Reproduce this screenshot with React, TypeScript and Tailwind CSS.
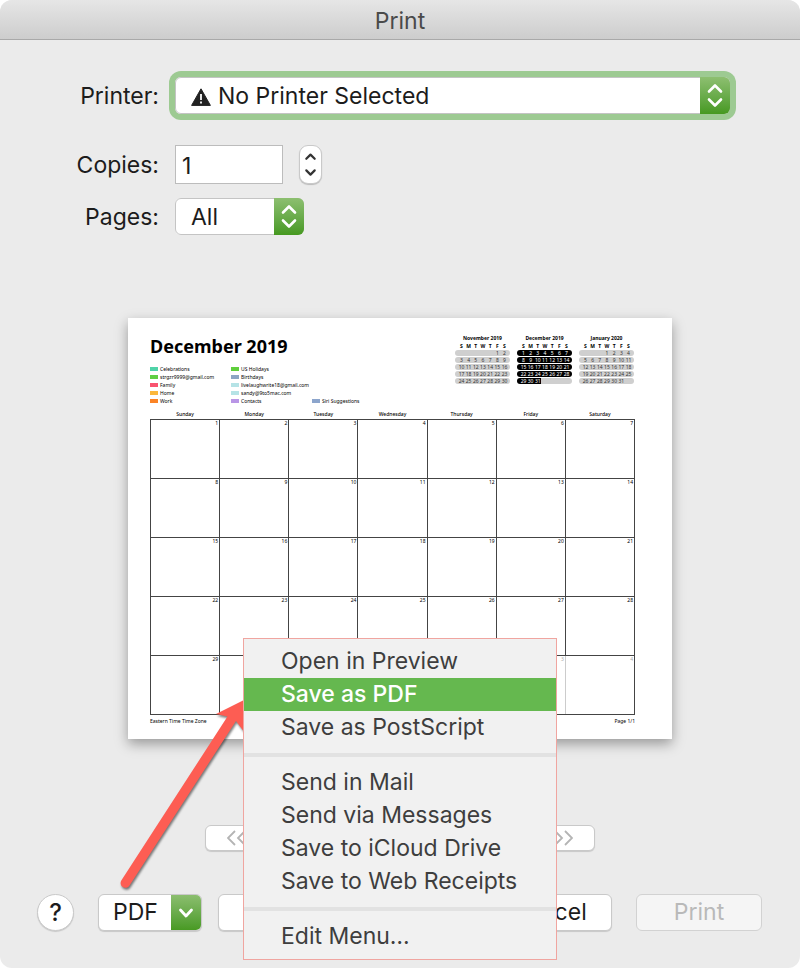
import React, { useState } from "react";

// ── Types ──────────────────────────────────────────────────────────
interface LegendEntry {
  name: string;
  swatch: string;
}

interface MiniMonthData {
  title: string;
  offset: number;
  days: number;
  active?: boolean;
}

// ── Data ───────────────────────────────────────────────────────────
const LEGEND: LegendEntry[][] = [
  [
    { name: "Celebrations", swatch: "bg-[#4fd3a8]" },
    { name: "strgzr9999@gmail.com", swatch: "bg-[#5fcf45]" },
    { name: "Family", swatch: "bg-[#f9536f]" },
    { name: "Home", swatch: "bg-[#fbb83c]" },
    { name: "Work", swatch: "bg-[#fb8426]" },
  ],
  [
    { name: "US Holidays", swatch: "bg-[#5fcf3c]" },
    { name: "Birthdays", swatch: "bg-[#8ca5c4]" },
    { name: "livelaughwrite18@gmail.com", swatch: "bg-[#b5e3e6]" },
    { name: "sandy@9to5mac.com", swatch: "bg-[#b5e3e6]" },
    { name: "Contacts", swatch: "bg-[#b996e6]" },
  ],
  [{ name: "Siri Suggestions", swatch: "bg-[#8ca5cc]" }],
];

const MONTHS: MiniMonthData[] = [
  { title: "November 2019", offset: 5, days: 30 },
  { title: "December 2019", offset: 0, days: 31, active: true },
  { title: "January 2020", offset: 3, days: 31 },
];

const WEEKDAYS = ["Sunday", "Monday", "Tuesday", "Wednesday", "Thursday", "Friday", "Saturday"];

const MENU_GROUPS = [
  ["Open in Preview", "Save as PDF", "Save as PostScript"],
  ["Send in Mail", "Send via Messages", "Save to iCloud Drive", "Save to Web Receipts"],
  ["Edit Menu…"],
];

// ── Arrow glyphs ───────────────────────────────────────────────────
const UpDown: React.FC = () => (
  <svg viewBox="0 0 30 37" className="h-full w-full" fill="none" stroke="white" strokeWidth="2.6" strokeLinecap="round" strokeLinejoin="round">
    <path d="M9 14.5 15 8.5l6 6M9 22.5l6 6 6-6" />
  </svg>
);

const Double: React.FC<{ flip?: boolean }> = ({ flip }) => (
  <svg viewBox="0 0 20 16" className="h-4 w-5" fill="none" stroke="#b4b4b4" strokeWidth="1.8">
    <path d={flip ? "M2 1l7 7-7 7M12 1l7 7-7 7" : "M8 1 1 8l7 7M18 1l-7 7 7 7"} />
  </svg>
);

// ── Popup select ───────────────────────────────────────────────────
interface PopupProps {
  id: string;
  value: string;
  className: string;
  selectClass: string;
  children?: React.ReactNode;
}

const Popup: React.FC<PopupProps> = ({ id, value, className, selectClass, children }) => (
  <div className={`relative h-[37px] rounded-md bg-white ${className}`}>
    <select
      id={id}
      className={`h-full w-full appearance-none rounded-md border border-[#c4c4c4] bg-white pt-[2px] text-[#1c1c1c] outline-none ${selectClass}`}
    >
      <option>{value}</option>
    </select>
    {children}
    <span className="pointer-events-none absolute inset-y-0 right-0 w-[30px] rounded-r-md bg-linear-to-b from-[#8dbf70] to-[#46991f]">
      <UpDown />
    </span>
  </div>
);

// ── Mini month ─────────────────────────────────────────────────────
const MiniMonth: React.FC<{ month: MiniMonthData }> = ({ month }) => {
  const cells = Array.from({ length: 35 }, (_, i) => {
    const day = i - month.offset + 1;
    return day >= 1 && day <= month.days ? day : null;
  });

  return (
    <table className="w-[55px] table-fixed border-separate border-spacing-x-0 border-spacing-y-px text-center text-[5px] leading-[6px]">
      <caption className="pb-px text-[5px] leading-[6px] font-bold">{month.title}</caption>
      <thead>
        <tr>
          {WEEKDAYS.map((d) => (
            <th key={d} className="p-0 font-bold first:w-[10px] first:pl-[3px] last:w-[9px] last:pr-[2px]">
              {d[0]}
            </th>
          ))}
        </tr>
      </thead>
      <tbody>
        {[0, 1, 2, 3, 4].map((w) => (
          <tr key={w}>
            {cells.slice(w * 7, w * 7 + 7).map((day, i) => (
              <td
                key={i}
                className={`h-[6px] p-0 first:rounded-l-full first:pl-[3px] last:rounded-r-full last:pr-[2px] ${
                  month.active && day ? "bg-black text-white" : "bg-[#cfcfcf] text-[#333]"
                }`}
              >
                {day}
              </td>
            ))}
          </tr>
        ))}
      </tbody>
    </table>
  );
};

// ── Month grid ─────────────────────────────────────────────────────
const MonthGrid: React.FC = () => (
  <table className="w-[485px] table-fixed border-collapse text-[5px] leading-[7px]">
    <thead>
      <tr>
        {WEEKDAYS.map((d) => (
          <th key={d} className="h-[8px] p-0 align-top font-medium">
            {d}
          </th>
        ))}
      </tr>
    </thead>
    <tbody>
      {[0, 1, 2, 3, 4].map((w) => (
        <tr key={w}>
          {WEEKDAYS.map((d, i) => {
            const n = w * 7 + i + 1;
            const next = n > 31;
            return (
              <td
                key={d}
                className={`h-[59px] border-y border-y-[#444] p-0 pr-px text-right align-top ${
                  next ? "text-[#aaa]" : ""
                } ${i === 0 ? "border-l border-l-[#444]" : ""} ${
                  next && i < 6 ? "border-r border-r-[#ccc]" : "border-r border-r-[#444]"
                }`}
              >
                {next ? n - 31 : n}
              </td>
            );
          })}
        </tr>
      ))}
    </tbody>
  </table>
);

// ── Page preview ───────────────────────────────────────────────────
const Preview: React.FC = () => (
  <section
    aria-label="Page preview"
    className="mx-auto h-[421px] w-[544px] bg-white pt-[17px] pl-[22px] font-['Noto_Sans',sans-serif] text-black shadow-[0_5px_12px_rgba(0,0,0,0.35)]"
  >
    <div className="flex h-[76px] w-[484px] justify-between">
      <div>
        <h2 className="text-lg leading-[22px] font-bold">December 2019</h2>
        <div className="mt-[8px] flex items-end text-[5px] leading-[8px]">
          {LEGEND.map((column, i) => (
            <ul key={i} className="w-[81px]">
              {column.map((entry) => (
                <li key={entry.name} className="flex items-center gap-[2px] whitespace-nowrap">
                  <span className={`h-1 w-2 shrink-0 ${entry.swatch}`} />
                  {entry.name}
                </li>
              ))}
            </ul>
          ))}
        </div>
      </div>
      <div className="flex items-start gap-[7px]">
        {MONTHS.map((m) => (
          <MiniMonth key={m.title} month={m} />
        ))}
      </div>
    </div>
    <MonthGrid />
    <div className="flex w-[485px] justify-between pt-[2px] text-[5px] leading-[8px]">
      <span>Eastern Time Time Zone</span>
      <span>Page 1/1</span>
    </div>
  </section>
);

// ── PDF menu ───────────────────────────────────────────────────────
const PdfMenu: React.FC = () => {
  const [selected, setSelected] = useState("Save as PDF");

  return (
    <div
      role="menu"
      className="absolute -bottom-[29px] left-[145px] z-20 w-[314px] border border-[#f0a5a0] bg-[#f1f1f1] py-[6px]"
    >
      {MENU_GROUPS.map((group, i) => (
        <React.Fragment key={i}>
          {i > 0 && <hr className="my-[9px] border-t-4 border-[#e2e2e2]" />}
          {group.map((item) => (
            <button
              key={item}
              role="menuitem"
              onMouseEnter={() => setSelected(item)}
              className={`block h-[33px] w-full pl-[37px] text-left ${
                item === selected ? "bg-[#65b84f] font-medium text-white" : "text-[#3e3e3e]"
              }`}
            >
              {item}
            </button>
          ))}
        </React.Fragment>
      ))}
    </div>
  );
};

// ── Main component ─────────────────────────────────────────────────
const BUTTON = "rounded-md border border-[#c9c9c9] bg-white shadow-[0_1px_1px_rgba(0,0,0,0.15)]";

const App: React.FC = () => (
  <div className="bg-white font-['Inter',sans-serif] text-[23px] leading-[33px] text-[#1c1c1c]">
    <div className="min-h-screen overflow-hidden rounded-xl bg-[#ebebeb]">
      <header className="flex h-10 items-center justify-center border-b border-[#a9a9a9] bg-linear-to-b from-[#e6e6e6] to-[#cdcdcd] pt-[4px]">
        <h1 className="text-[#4a4a4a]">Print</h1>
      </header>

      {/* Options */}
      <form className="grid grid-cols-[159px_1fr] items-center gap-x-4 pt-[37px] pr-[70px]">
        <label htmlFor="printer" className="pt-[2px] text-right">
          Printer:
        </label>
        <Popup id="printer" value="No Printer Selected" className="ring-6 ring-[#9dca92]" selectClass="pl-[42px]">
          <svg viewBox="0 0 20 18" className="pointer-events-none absolute top-[11px] left-4 h-[18px] w-5">
            <path d="M10 .8 19.4 17.4H.6z" fill="#222" stroke="#222" strokeLinejoin="round" />
            <path d="M10 6v6M10 13.5v2" stroke="white" strokeWidth="1.8" />
          </svg>
        </Popup>

        <label htmlFor="copies" className="mt-[31px] pt-[2px] text-right">
          Copies:
        </label>
        <div className="mt-[31px] flex gap-4">
          <input
            id="copies"
            defaultValue="1"
            className="h-[39px] w-[108px] border border-[#bcbcbc] bg-white pt-[2px] pl-[6px] outline-none"
          />
          <button
            type="button"
            aria-label="Change copies"
            className="h-[39px] w-[23px] rounded-[9px] border border-[#c9c9c9] bg-white shadow-[0_1px_1px_rgba(0,0,0,0.2)]"
          >
            <svg viewBox="0 0 21 37" className="h-full w-full" fill="none" stroke="#333" strokeWidth="2.2" strokeLinecap="round" strokeLinejoin="round">
              <path d="M6.3 12.8 10.5 8.6l4.2 4.2M6.3 24.4l4.2 4.2 4.2-4.2" />
            </svg>
          </button>
        </div>

        <label htmlFor="pages" className="mt-[14px] pt-[2px] text-right">
          Pages:
        </label>
        <Popup id="pages" value="All" className="mt-[14px] w-[129px]" selectClass="pl-[15px]" />
      </form>

      <main className="pt-[83px]">
        <Preview />
      </main>

      <nav aria-label="Preview pages" className="mx-auto mt-[86px] flex w-[390px] justify-between">
        <button aria-label="First page" className={`flex h-[26px] w-[64px] items-center justify-center ${BUTTON}`}>
          <Double />
        </button>
        <button aria-label="Last page" className={`flex h-[26px] w-[64px] items-center justify-center ${BUTTON}`}>
          <Double flip />
        </button>
      </nav>

      {/* Actions */}
      <footer className="mt-[43px] flex items-center pr-[38px] pb-[37px] pl-[37px]">
        <button aria-label="Help" className="size-[37px] rounded-full border border-[#c9c9c9] bg-white text-2xl font-medium shadow-[0_1px_1px_rgba(0,0,0,0.15)]">
          ?
        </button>

        <div className="relative ml-6">
          <button className={`flex h-[37px] w-[104px] items-center justify-between overflow-hidden pl-[14px] ${BUTTON}`}>
            PDF
            <span className="h-[37px] w-[30px] bg-linear-to-b from-[#8dbf70] to-[#46991f]">
              <svg viewBox="0 0 30 37" className="h-full w-full" fill="none" stroke="white" strokeWidth="2.8" strokeLinecap="round" strokeLinejoin="round">
                <path d="M9.5 16l5.5 6 5.5-6" />
              </svg>
            </span>
          </button>
          <svg
            viewBox="90 690 160 204"
            className="pointer-events-none absolute bottom-[37px] left-[-8px] z-10 h-[204px] w-[160px] drop-shadow-[1px_2px_1px_rgba(0,0,0,0.5)]"
          >
            <path d="M121.3 880.5 227.5 716.5 216 714 248 698 243.5 731 236 721 129.5 885.5A4.8 4.8 0 0 1 121.3 880.5z" fill="#fd5d53" />
          </svg>
          <PdfMenu />
        </div>

        <button aria-label="Details" className={`ml-4 h-[37px] w-[190px] ${BUTTON}`} />
        <button className={`ml-auto h-[37px] w-[126px] ${BUTTON}`}>Cancel</button>
        <button disabled className="ml-6 h-[37px] w-[126px] rounded-md border border-[#d2d2d2] bg-[#f5f5f5] text-[#b9b9b9]">
          Print
        </button>
      </footer>
    </div>
  </div>
);

export default App;
